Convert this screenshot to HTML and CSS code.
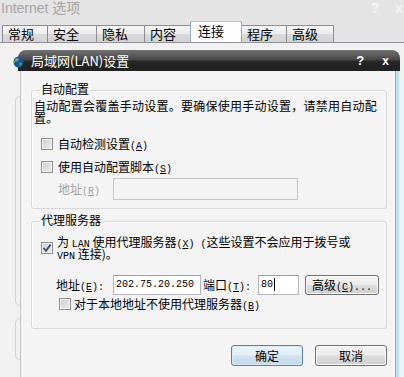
FILE: index.html
```html
<!DOCTYPE html>
<html lang="zh-CN">
<head>
    <meta charset="UTF-8">
    <title>Internet 选项</title>
    <link rel="stylesheet" href="styles.css">
</head>
<body>
    <div id="options-window">
        <div class="win-title">
            <span class="win-title-text">Internet 选项</span>
            <span class="win-title-help">?</span>
            <span class="win-title-close">x</span>
        </div>
        <ul class="tabs">
            <li class="tab">常规</li>
            <li class="tab w49">安全</li>
            <li class="tab w48">隐私</li>
            <li class="tab w47">内容</li>
            <li class="tab active">连接</li>
            <li class="tab w45">程序</li>
            <li class="tab w47">高级</li>
        </ul>
        <div class="tab-panel">
            <div class="panel-box first"></div>
            <div class="panel-box second"></div>
        </div>
    </div>

    <!-- LAN settings dialog, sits over the options window -->
    <div id="lan-dialog">
        <svg class="dlg-icon" width="11" height="12" viewBox="0 0 11 12">
            <ellipse cx="5.5" cy="6" rx="5" ry="5.6" fill="#1c4f9c"/>
            <path d="M2 3.5 C3.5 2.5 5 3 5 4.5 C4 6 2.5 6 1.5 7.5 C0.8 6 1 4.5 2 3.5Z" fill="#3fa33a"/>
            <path d="M6.5 6.5 C8 6 9.5 7 9 8.5 C8 10 7 10.5 6 10 C6.5 9 6 7.5 6.5 6.5Z" fill="#3fa33a"/>
            <ellipse cx="4" cy="3.5" rx="2" ry="1.3" fill="#8fc3f0" opacity="0.6"/>
        </svg>
        <div class="dlg-title">
            <span class="dlg-title-text">局域网(LAN)设置</span>
            <span class="dlg-help">?</span>
            <span class="dlg-close">x</span>
        </div>
        <div class="dlg-body">
            <div class="group">
                <div class="group-title">自动配置</div>
                <div class="note">
                    <div class="line">自动配置会覆盖手动设置。要确保使用手动设置，请禁用自动配</div>
                    <div class="line">置。</div>
                </div>
                <div class="check-row row-a">
                    <span class="cb"></span>
                    <span class="cb-label">自动检测设置<span class="en">(<u>A</u>)</span></span>
                </div>
                <div class="check-row row-s">
                    <span class="cb"></span>
                    <span class="cb-label">使用自动配置脚本<span class="en">(<u>S</u>)</span></span>
                </div>
                <div class="field-row script-row">
                    <span class="field-label disabled">地址<span class="en">(<u>R</u>)</span></span>
                    <span class="input script-input"></span>
                </div>
            </div>

            <div class="group proxy">
                <div class="group-title">代理服务器</div>
                <div class="proxy-row">
                    <span class="cb checked">
                        <svg width="10" height="10" viewBox="0 0 10 10">
                            <path d="M1.5 5 L4 7.8 L8.6 1.6" fill="none" stroke="#3a4f6e" stroke-width="1.8"/>
                        </svg>
                    </span>
                    <div class="proxy-label">
                        <div class="line">为 <span class="en">LAN</span> 使用代理服务器<span class="en">(<u>X</u>) (</span>这些设置不会应用于拨号或</div>
                        <div class="line"><span class="en">VPN</span> 连接)。</div>
                    </div>
                </div>
                <div class="field-row addr-row">
                    <span class="field-label addr-label">地址<span class="en">(<u>E</u>):</span></span>
                    <span class="input addr-input en">202.75.20.250</span>
                    <span class="field-label port-label">端口<span class="en">(<u>T</u>):</span></span>
                    <span class="input port-input en">80<span class="caret"></span></span>
                    <button class="btn adv-btn">高级<span class="en">(<u>C</u>)...</span></button>
                </div>
                <div class="check-row bypass-row">
                    <span class="cb"></span>
                    <span class="cb-label">对于本地地址不使用代理服务器<span class="en">(<u>B</u>)</span></span>
                </div>
            </div>

            <div class="dlg-buttons">
                <button class="btn default">确定</button>
                <button class="btn">取消</button>
            </div>
        </div>
    </div>
</body>
</html>
```

FILE: styles.css
```css
body {
    margin: 0;
    width: 404px;
    height: 377px;
    overflow: hidden;
    position: relative;
    background-color: #e4e4e4;
    font-family: 'Noto Sans CJK SC', sans-serif;
    font-size: 12px;
    color: #000;
}
.en {
    font-family: 'Liberation Mono', monospace;
    font-size: 10px;
    line-height: 6px;
}
.en u {
    text-decoration-thickness: 1px;
    text-underline-offset: 1px;
}

/* parent window */
.win-title {
    height: 22px;
    display: flex;
    align-items: flex-start;
    color: #a4a4a4;
    font-family: 'Liberation Sans', 'Noto Sans CJK SC', sans-serif;
    font-size: 14px;
    line-height: 16px;
}
.win-title-text {
    margin-left: 1px;
}
.win-title-help {
    margin-left: auto;
    color: #f4f4f4;
    font-weight: bold;
}
.win-title-close {
    margin: 0 1px 0 16px;
    color: #f4f4f4;
    font-weight: bold;
}
.tabs {
    list-style-type: none;
    margin: 0;
    padding: 0 0 0 2px;
    height: 20px;
    display: flex;
    align-items: flex-end;
}
.tab {
    box-sizing: border-box;
    width: 46px;
    height: 17px;
    padding: 0 0 0 5px;
    border: 1px solid #8a8d95;
    border-bottom: none;
    margin-right: -1px;
    background: linear-gradient(#f6f6f6, #ececec 50%, #dadada 52%, #d2d2d2);
    font-size: 13px;
    line-height: 15px;
}
.tab.w49 { width: 50px; }
.tab.w48 { width: 49px; }
.tab.w47 { width: 48px; }
.tab.w45 { width: 46px; }
.tab.active {
    width: 52px;
    height: 21px;
    padding-left: 7px;
    margin: 0 -1px 0 -1px;
    background: #fdfdfd;
    border-color: #9fd3e6 #8fb0c0 transparent;
    line-height: 18px;
    position: relative;
    z-index: 1;
}
.tab-panel {
    border-top: 1px solid #8e9298;
    background-color: #f1f1f1;
    height: 335px;
    padding-top: 53px;
    box-sizing: border-box;
    overflow: hidden;
}
.panel-box {
    margin-left: 15px;
    width: 380px;
    border: 1px solid #c6d6e0;
    border-radius: 5px;
}
.panel-box.first {
    height: 208px;
}
.panel-box.second {
    margin-top: 12px;
    height: 40px;
}

/* LAN dialog */
#lan-dialog {
    position: absolute;
    left: 17px;
    top: 50px;
    width: 383px;
}
.dlg-icon {
    position: absolute;
    left: -4px;
    top: 6px;
    z-index: 2;
}
.dlg-title {
    margin-left: 1px;
    height: 21px;
    border-radius: 8px 8px 0 0;
    background: linear-gradient(#727272, #484848 45%, #262626 55%, #202020);
    color: #fff;
    display: flex;
    align-items: center;
    font-size: 13px;
    line-height: 16px;
}
.dlg-title-text {
    margin-left: 13px;
}
.dlg-help {
    margin-left: auto;
    font-family: 'Liberation Sans', sans-serif;
    font-weight: bold;
    font-size: 13px;
}
.dlg-close {
    margin: 0 11px 0 18px;
    font-family: 'Liberation Sans', sans-serif;
    font-weight: bold;
    font-size: 12px;
}
.dlg-body {
    margin-left: 3px;
    width: 376px;
    height: 306px;
    box-sizing: border-box;
    border-left: 1px solid #c4c4c4;
    border-right: 1px solid #a9a9a9;
    box-shadow: 3px 0 0 #bfe2ec;
    background-color: #f4f4f4;
    padding: 19px 8px 0 10px;
}
.group {
    padding: 0 3px 8px 3px;
    border: 1px solid #d8d8d8;
    border-radius: 3px;
    box-shadow: inset 1px 1px 0 #fff;
}
.group-title {
    width: fit-content;
    margin: -9px 0 0 5px;
    padding: 0 1px;
    line-height: 14px;
    background-color: #f4f4f4;
}
.line {
    height: 12px;
    line-height: 12px;
    white-space: nowrap;
}
.note {
    margin: 4px 0 0 -1px;
    letter-spacing: 0.25px;
}
.check-row {
    display: flex;
    align-items: center;
    padding-left: 6px;
}
.row-a {
    margin-top: 8px;
    height: 23px;
}
.row-s {
    height: 23px;
}
.cb {
    box-sizing: border-box;
    width: 12px;
    height: 12px;
    border: 1px solid #8f8f8f;
    background: linear-gradient(135deg, #c9ccd1, #eeeeee);
    box-shadow: inset 0 0 0 1px #f2f2f2;
    display: flex;
    align-items: center;
    justify-content: center;
    flex: none;
}
.cb-label {
    margin-left: 5px;
    line-height: 14px;
}
.field-row {
    display: flex;
    align-items: center;
}
.script-row {
    height: 22px;
    padding-left: 23px;
}
.field-label {
    line-height: 14px;
    flex: none;
}
.disabled {
    color: #a3a3a3;
}
.script-row .field-label {
    width: 55px;
}
.input {
    box-sizing: border-box;
    border: 1px solid #b4b6bb;
    border-top-color: #9ea0a6;
    background-color: #fff;
    flex: none;
    display: flex;
    align-items: center;
    padding-left: 2px;
    line-height: 14px;
}
.script-input {
    width: 185px;
    height: 22px;
    background-color: #f4f4f4;
    border-color: #c6c6c6;
}
.proxy {
    margin-top: 12px;
    padding-bottom: 15px;
}
.proxy-row {
    display: flex;
    align-items: flex-start;
    padding: 9px 0 0 6px;
}
.proxy-row .cb {
    margin-top: 6px;
}
.proxy-label {
    margin-left: 4px;
}
.addr-row {
    margin-top: 14px;
    height: 21px;
    padding-left: 21px;
}
.addr-label {
    width: 57px;
}
.addr-input {
    width: 88px;
    height: 20px;
}
.port-label {
    margin-left: 2px;
    width: 55px;
}
.port-input {
    width: 41px;
    height: 20px;
}
.caret {
    width: 1px;
    height: 13px;
    margin-left: 1px;
    background-color: #000;
}
.btn {
    box-sizing: border-box;
    height: 21px;
    padding: 0;
    border: 1px solid #707070;
    border-radius: 3px;
    background: linear-gradient(#f2f2f2, #ebebeb 48%, #dddddd 52%, #cfcfcf);
    box-shadow: inset 0 0 0 1px #fbfbfb;
    font-family: 'Noto Sans CJK SC', sans-serif;
    font-size: 12px;
    line-height: 14px;
    color: #000;
}
.adv-btn {
    margin-left: 6px;
    width: 74px;
    height: 20px;
}
.bypass-row {
    height: 18px;
    padding-left: 24px;
}
.bypass-row .cb-label {
    margin-left: 3px;
}
.dlg-buttons {
    margin-top: 16px;
    display: flex;
    justify-content: flex-end;
    gap: 12px;
}
.dlg-buttons .btn {
    width: 72px;
}
.btn.default {
    border-color: #4b86b3;
    background: linear-gradient(#eef5fa, #e2edf5 48%, #d0e2ee 52%, #c4d9e8);
    box-shadow: inset 0 0 0 1px #d6ebf7;
}
```
